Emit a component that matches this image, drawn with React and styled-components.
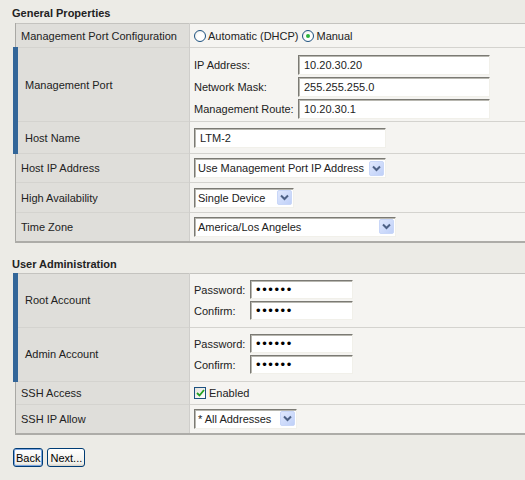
import React from "react";
import styled, { createGlobalStyle } from "styled-components";

const GlobalStyle = createGlobalStyle`
  html, body {
    margin: 0;
    padding: 0;
    background: #ecebe6;
    overflow: hidden;
  }
  body {
    font-family: "Liberation Sans", Arial, sans-serif;
    font-size: 11px;
    color: #222;
  }
`;

const Page = styled.div`
  padding: 5px 0 0 12px;
`;

const SectionTitle = styled.div`
  font-weight: bold;
  line-height: 16px;
  margin-top: ${(p) => p.$top || 0}px;
  margin-bottom: ${(p) => p.$bottom || 1}px;
`;

const Table = styled.table`
  margin-left: 1px;
  width: 512px;
  border-collapse: collapse;
  border-top: 1px solid #c4c3bf;
  border-left: 1px solid #a9a8a4;
  border-bottom: 2px solid #adaca8;

  & td {
    border-top: 1px solid #d4d3cf;
  }
  & tr:first-child td {
    border-top: none;
  }
`;

const Row = styled.tr`
  height: ${(p) => p.$h}px;
`;

const Label = styled.td`
  width: 174px;
  box-sizing: border-box;
  background: #dfdeda;
  padding: 0 0 0 ${(p) => (p.$marked ? 7 : 5)}px;
  border-left: ${(p) => (p.$marked ? "5px solid #336699" : "1px solid #a9a8a4")};
  border-right: 1px solid #cfcecb;
  vertical-align: middle;
  white-space: nowrap;
`;

const Value = styled.td`
  background: #f5f4f1;
  padding: 0 0 0 4px;
  vertical-align: middle;
`;

const TextInput = styled.input`
  box-sizing: border-box;
  width: ${(p) => p.$w}px;
  height: ${(p) => p.$hgt || 20}px;
  margin: 0;
  padding: 0 0 0 5px;
  border: 1px solid;
  border-color: #7b7a74 #f1f0ea #f1f0ea #7b7a74;
  box-shadow: inset 1px 1px 0 #b8b7b0;
  background: #fff;
  font-family: "Liberation Sans", Arial, sans-serif;
  font-size: 11px;
  color: #222;
  outline: none;

  &[type="password"] {
    font-size: 13px;
    letter-spacing: 1.6px;
    color: #000;
  }
`;

const FieldGrid = styled.div`
  display: grid;
  grid-template-columns: ${(p) => p.$labelW}px auto;
  row-gap: 2px;
  align-items: center;
  padding: ${(p) => p.$pad || "0"};
`;

const FieldLabel = styled.span`
  white-space: nowrap;
`;

const RadioGroup = styled.div`
  display: flex;
  align-items: center;
`;

const RadioCircle = styled.span`
  box-sizing: border-box;
  width: 12px;
  height: 12px;
  border-radius: 50%;
  border: 1px solid #1c5180;
  background: radial-gradient(circle at 60% 60%, #fff 40%, #e6e5df 100%);
  display: inline-flex;
  align-items: center;
  justify-content: center;
  margin-right: 2px;
  margin-left: ${(p) => (p.$first ? 0 : 4)}px;
  &::after {
    content: "";
    width: 4px;
    height: 4px;
    border-radius: 50%;
    background: #2bb33a;
    display: ${(p) => (p.$checked ? "block" : "none")};
  }
`;

const Select = styled.div`
  box-sizing: border-box;
  width: ${(p) => p.$w}px;
  height: 20px;
  display: flex;
  align-items: center;
  justify-content: space-between;
  padding: 0 1px 0 3px;
  border: 1px solid;
  border-color: #7b7a74 #f1f0ea #f1f0ea #7b7a74;
  box-shadow: inset 1px 1px 0 #b8b7b0;
  background: #fff;
  white-space: nowrap;
`;

const ArrowBox = styled.span`
  box-sizing: border-box;
  width: 15px;
  height: 15px;
  border-radius: 2px;
  background: linear-gradient(135deg, #e0e8fd 0%, #bfd0f8 100%);
  border: 1px solid #c9d7f8;
  display: inline-flex;
  align-items: center;
  justify-content: center;
`;

const CheckRow = styled.label`
  display: flex;
  align-items: center;
`;

const CheckBox = styled.span`
  box-sizing: border-box;
  width: 12px;
  height: 12px;
  border: 1px solid #1c5180;
  background: linear-gradient(135deg, #e3e2dc, #fff);
  display: inline-flex;
  align-items: center;
  justify-content: center;
  margin-right: 3px;
`;

const Buttons = styled.div`
  display: flex;
  gap: 4px;
  margin: 13px 0 0 1px;
`;

const Button = styled.button`
  box-sizing: border-box;
  height: 19px;
  padding: 0 2px;
  border: 1px solid #003c74;
  border-radius: 3px;
  background: linear-gradient(#ffffff, #f0efe9 85%, #d6d0c5);
  font-family: "Liberation Sans", Arial, sans-serif;
  font-size: 11px;
  color: #000;
  box-shadow: ${(p) => (p.$focus ? "inset 0 0 0 1px #7ba4e0" : "none")};
`;

const Arrow = () => (
  <ArrowBox>
    <svg width="9" height="7" viewBox="0 0 9 7">
      <path d="M1 1.5 L4.5 5 L8 1.5" fill="none" stroke="#4d6185" strokeWidth="2" />
    </svg>
  </ArrowBox>
);

const Dropdown = ({ w, children }) => (
  <Select $w={w}>
    <span>{children}</span>
    <Arrow />
  </Select>
);

const Check = () => (
  <svg width="9" height="8" viewBox="0 0 9 8">
    <path d="M1 4 L3.5 6.5 L8 1" fill="none" stroke="#21a121" strokeWidth="1.8" />
  </svg>
);

const PasswordPair = () => (
  <FieldGrid $labelW={56}>
    <FieldLabel>Password:</FieldLabel>
    <TextInput type="password" readOnly value="secret" $w={103} $hgt={19} />
    <FieldLabel>Confirm:</FieldLabel>
    <TextInput type="password" readOnly value="secret" $w={103} $hgt={19} />
  </FieldGrid>
);

export default function App() {
  return (
    <Page>
      <GlobalStyle />
      <SectionTitle $bottom={2}>General Properties</SectionTitle>
      <Table>
        <tbody>
          <Row $h={24}>
            <Label>Management Port Configuration</Label>
            <Value>
              <RadioGroup>
                <RadioCircle $first />
                <span>Automatic (DHCP)</span>
                <RadioCircle $checked />
                <span>Manual</span>
              </RadioGroup>
            </Value>
          </Row>
          <Row $h={74}>
            <Label $marked>Management Port</Label>
            <Value>
              <FieldGrid $labelW={104} $pad="5px 0 1px 0">
                <FieldLabel>IP Address:</FieldLabel>
                <TextInput readOnly value="10.20.30.20" $w={192} />
                <FieldLabel>Network Mask:</FieldLabel>
                <TextInput readOnly value="255.255.255.0" $w={192} />
                <FieldLabel>Management Route:</FieldLabel>
                <TextInput readOnly value="10.20.30.1" $w={192} />
              </FieldGrid>
            </Value>
          </Row>
          <Row $h={32}>
            <Label $marked>Host Name</Label>
            <Value>
              <TextInput readOnly value="LTM-2" $w={192} />
            </Value>
          </Row>
          <Row $h={29}>
            <Label>Host IP Address</Label>
            <Value>
              <Dropdown w={192}>Use Management Port IP Address</Dropdown>
            </Value>
          </Row>
          <Row $h={30}>
            <Label>High Availability</Label>
            <Value>
              <Dropdown w={100}>Single Device</Dropdown>
            </Value>
          </Row>
          <Row $h={29}>
            <Label>Time Zone</Label>
            <Value>
              <Dropdown w={202}>America/Los Angeles</Dropdown>
            </Value>
          </Row>
        </tbody>
      </Table>

      <SectionTitle $top={13}>User Administration</SectionTitle>
      <Table>
        <tbody>
          <Row $h={54}>
            <Label $marked>Root Account</Label>
            <Value>
              <PasswordPair />
            </Value>
          </Row>
          <Row $h={54}>
            <Label $marked>Admin Account</Label>
            <Value>
              <PasswordPair />
            </Value>
          </Row>
          <Row $h={23}>
            <Label>SSH Access</Label>
            <Value>
              <CheckRow>
                <CheckBox>
                  <Check />
                </CheckBox>
                Enabled
              </CheckRow>
            </Value>
          </Row>
          <Row $h={30}>
            <Label>SSH IP Allow</Label>
            <Value>
              <Dropdown w={103}>* All Addresses</Dropdown>
            </Value>
          </Row>
        </tbody>
      </Table>

      <Buttons>
        <Button $focus>Back</Button>
        <Button>Next...</Button>
      </Buttons>
    </Page>
  );
}
